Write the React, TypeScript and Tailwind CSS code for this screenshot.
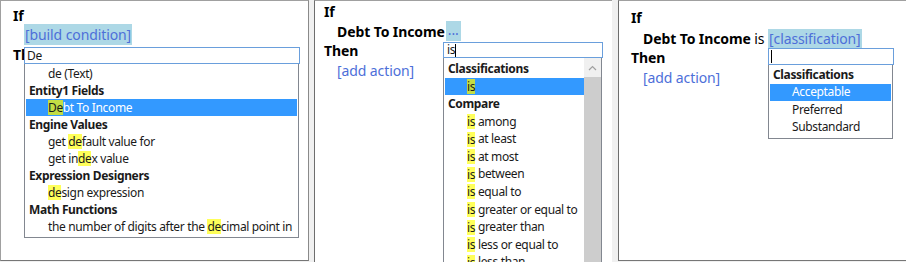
import React from "react";

const font = "font-['Noto_Sans',sans-serif]";

function Hit({ children, sel }: { children: React.ReactNode; sel?: boolean }) {
  return (
    <span className={`${sel ? "bg-[#c3dd44] text-[#1a1a1a]" : "bg-[#ffff5a]"} inline-block leading-[15px]`}>
      {children}
    </span>
  );
}

function Head({ text, h }: { text: string; h: string }) {
  return <div className={`${h} pl-[3px] flex items-center font-bold text-[#1a1a1a] whitespace-nowrap`}>{text}</div>;
}

function Item({
  pre = "",
  hit = "",
  post = "",
  sel,
  h,
}: {
  pre?: string;
  hit?: string;
  post?: string;
  sel?: boolean;
  h: string;
}) {
  return (
    <div
      className={`${h} pl-[22px] flex items-center whitespace-pre ${
        sel ? "bg-[#3399ff] text-white" : "text-[#1a1a1a]"
      }`}
    >
      {pre}
      {hit && <Hit sel={sel}>{hit}</Hit>}
      {post}
    </div>
  );
}

function Caret() {
  return <span className="inline-block w-px h-[13px] bg-black" />;
}

function Chevron() {
  return (
    <svg width="9" height="6" viewBox="0 0 9 6" className="text-[#a0a0a0]">
      <path d="M1 5 L4.5 1.5 L8 5" fill="none" stroke="currentColor" strokeWidth="1.2" />
    </svg>
  );
}

const link = "text-[#4d6fd9]";
const tag = "bg-[#add8e6]";
const list = "text-[12px] tracking-[-0.35px]";

export default function App() {
  return (
    <div className={`${font} w-[906px] h-[262px] bg-[#f0f0f0] flex items-start overflow-hidden text-black tracking-[-0.1px]`}>
      {/* first shot: building a condition */}
      <div className="relative w-[309px] h-[261px] shrink-0 bg-white border border-[#a0a0a0] border-b-[#767676] border-r-[#8a8a8a] pl-[12px] pt-[7px] text-[14px]">
        <div className="h-[16px] leading-[16px] font-bold">If</div>
        <div className="h-[21px] flex">
          <span className={`${tag} ${link} ml-[11px] px-px leading-[21px]`}>[build condition]</span>
        </div>
        <div className="h-[18px] mt-px leading-[18px] font-bold">Then</div>

        <div className={`absolute left-[23px] top-[46px] w-[276px] ${list}`}>
          <div className="h-[17px] border border-[#6a9fdc] bg-white pl-[2px] leading-[15px] text-[#1a1a1a]">De</div>
          <div className="w-[275px] border border-[#828790] border-t-0 bg-white px-px pt-px pb-[2px]">
            <Item h="h-[17px]" pre="de (Text)" />
            <Head h="h-[17px]" text="Entity1 Fields" />
            <Item h="h-[17px]" hit="De" post="bt To Income" sel />
            <Head h="h-[17px]" text="Engine Values" />
            <Item h="h-[17px]" pre="get " hit="de" post="fault value for" />
            <Item h="h-[17px]" pre="get in" hit="de" post="x value" />
            <Head h="h-[17px]" text="Expression Designers" />
            <Item h="h-[17px]" hit="de" post="sign expression" />
            <Head h="h-[17px]" text="Math Functions" />
            <Item h="h-[17px]" pre="the number of digits after the " hit="de" post="cimal point in" />
          </div>
        </div>
      </div>

      {/* second shot: choosing the operator */}
      <div className="relative ml-[5px] w-[298px] h-[262px] shrink-0 bg-white border-l border-t border-l-[#6d6d6d] border-t-[#a0a0a0] pl-[9px] pt-[3px] text-[14px]">
        <div className="h-[16px] leading-[16px] font-bold">If</div>
        <div className="h-[20px] mt-px pl-[13px] flex items-center">
          <span className="font-bold">Debt To Income</span>
          <span className={`${tag} ${link} h-[20px] leading-[18px] px-[2px] ml-px`}>...</span>
        </div>
        <div className="h-[20px] leading-[20px] font-bold">Then</div>
        <div className={`h-[20px] leading-[20px] pl-[13px] ${link}`}>[add action]</div>

        <div className={`absolute left-[128px] top-[41px] w-[160px] ${list}`}>
          <div className="h-[16px] border border-[#6a9fdc] bg-white pl-[3px] flex items-center text-[#1a1a1a]">
            is
            <Caret />
          </div>
          <div className="w-[159px] h-[210px] border border-[#828790] border-b-0 border-t-0 bg-white pl-px flex">
            <div className="flex-1 pt-[2px]">
              <Head h="h-[17.6px]" text="Classifications" />
              <Item h="h-[17.6px]" hit="is" sel />
              <Head h="h-[17.6px]" text="Compare" />
              <Item h="h-[17.6px]" hit="is" post=" among" />
              <Item h="h-[17.6px]" hit="is" post=" at least" />
              <Item h="h-[17.6px]" hit="is" post=" at most" />
              <Item h="h-[17.6px]" hit="is" post=" between" />
              <Item h="h-[17.6px]" hit="is" post=" equal to" />
              <Item h="h-[17.6px]" hit="is" post=" greater or equal to" />
              <Item h="h-[17.6px]" hit="is" post=" greater than" />
              <Item h="h-[17.6px]" hit="is" post=" less or equal to" />
              <Item h="h-[17.6px]" hit="is" post=" less than" />
            </div>
            <div className="w-[17px] flex flex-col">
              <div className="h-[19px] bg-[#f0f0f0] flex items-center justify-center">
                <Chevron />
              </div>
              <div className="flex-1 bg-[#cdcdcd]" />
            </div>
          </div>
        </div>
      </div>

      {/* third shot: choosing the classification */}
      <div className="relative ml-[6px] w-[288px] h-[261px] shrink-0 bg-white border-l border-t border-b border-l-[#6d6d6d] border-t-[#a0a0a0] border-b-[#767676] pl-[12px] pt-[9px] text-[14px]">
        <div className="h-[16px] leading-[16px] font-bold">If</div>
        <div className="h-[20px] mt-[2px] pl-[12px] flex items-center whitespace-pre">
          <span className="font-bold">Debt To Income</span>
          <span> is </span>
          <span className={`${tag} ${link} h-[19px] leading-[19px] px-px`}>[classification]</span>
        </div>
        <div className="h-[20px] leading-[20px] font-bold">Then</div>
        <div className={`h-[20px] leading-[20px] pl-[12px] ${link}`}>[add action]</div>

        <div className={`absolute left-[149px] top-[47px] w-[126px] ${list}`}>
          <div className="h-[17px] border border-[#6a9fdc] bg-white pl-[2px] flex items-center">
            <Caret />
          </div>
          <div className="w-[125px] border border-[#828790] border-t-0 bg-white px-px pt-px pb-[2px]">
            <Head h="h-[17.5px]" text="Classifications" />
            <Item h="h-[17.5px]" pre="Acceptable" sel />
            <Item h="h-[17.5px]" pre="Preferred" />
            <Item h="h-[17.5px]" pre="Substandard" />
          </div>
        </div>
      </div>
    </div>
  );
}
